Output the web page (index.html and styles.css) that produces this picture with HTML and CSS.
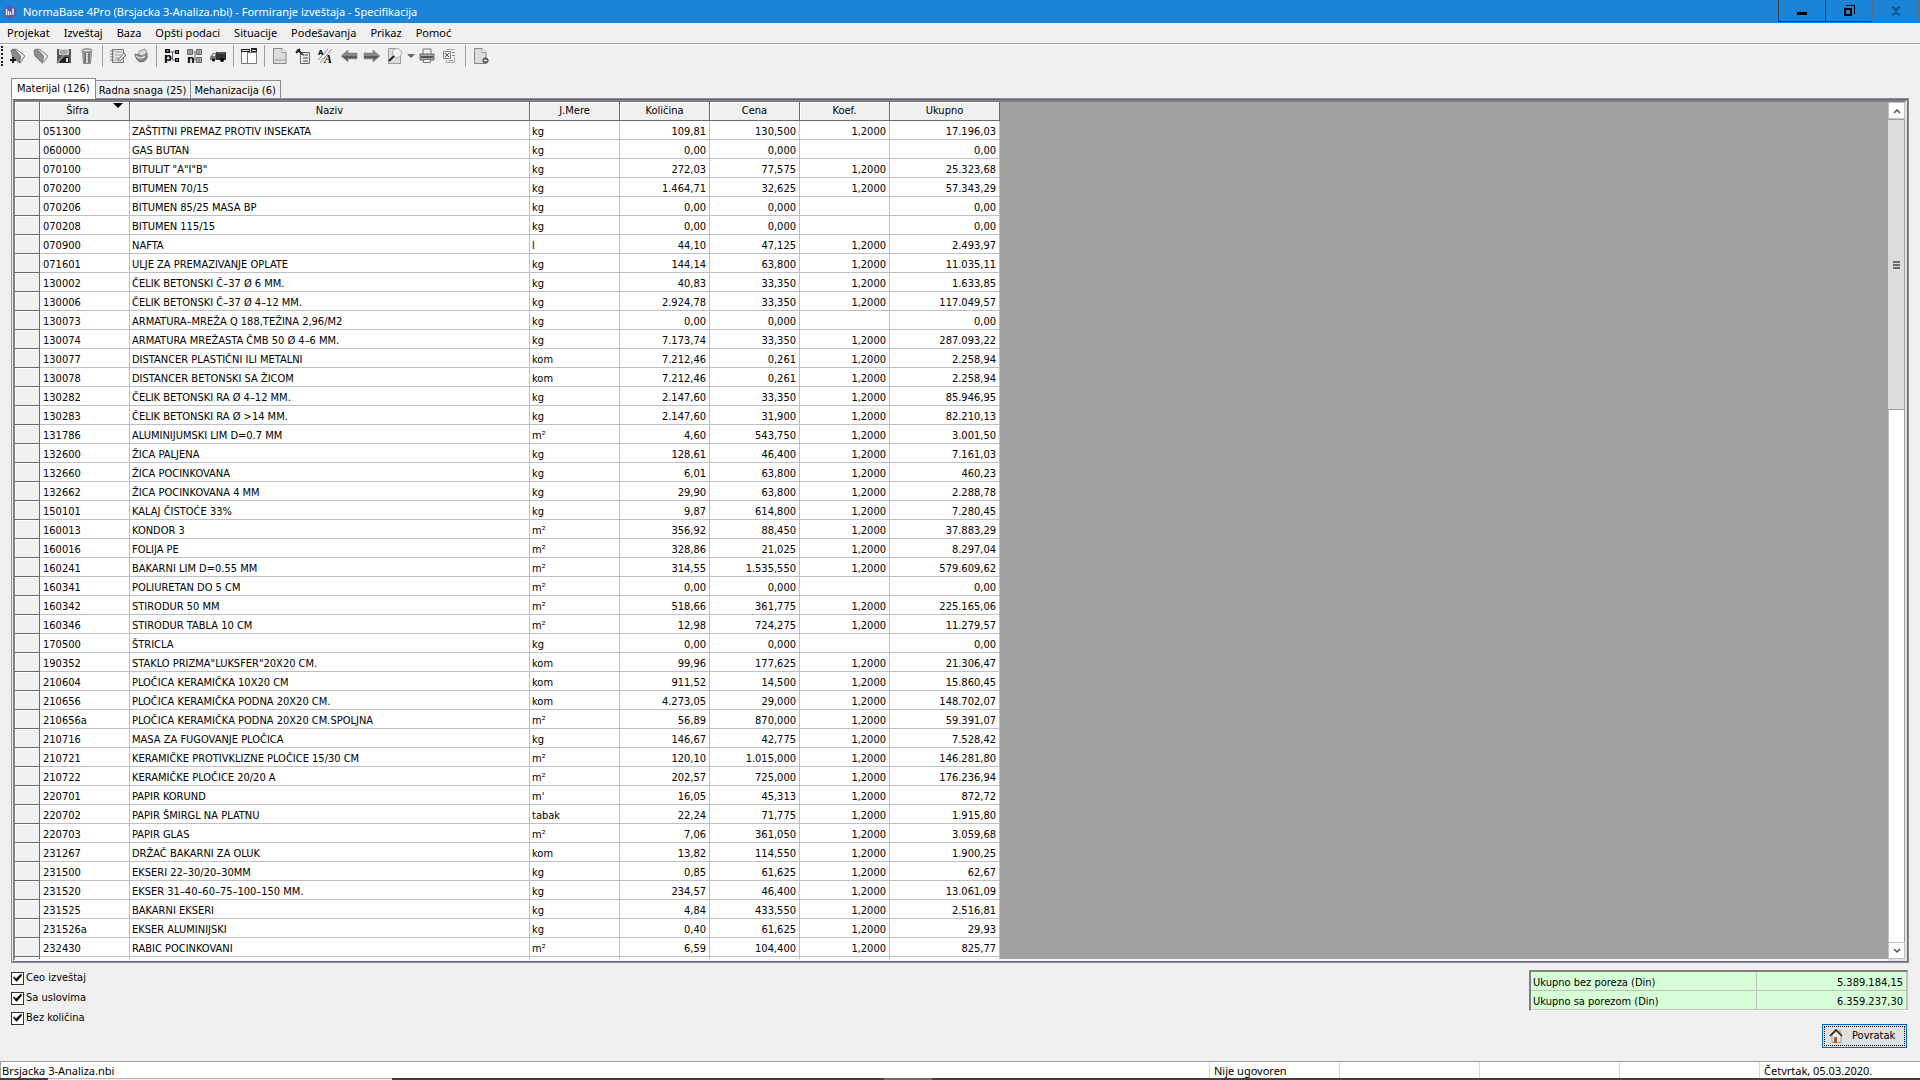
FILE: index.html
```html
<!DOCTYPE html>
<html lang="sr-Latn">
<head>
    <meta charset="UTF-8">
    <meta name="viewport" content="width=device-width, initial-scale=1.0">
    <title>NormaBase 4Pro</title>
    <link rel="stylesheet" href="styles.css">
</head>
<body>
    <header class="titlebar">
        <svg class="app-icon" viewBox="0 0 14 14">
            <circle cx="7" cy="7" r="6.5" fill="#5560a8"/>
            <path d="M3.5 4v6M5.5 6v4M7.5 7v3M10 3.5v6.500" stroke="#fff" stroke-width="1.300"/>
        </svg>
        <h1>NormaBase 4Pro (Brsjacka 3-Analiza.nbi) - Formiranje izveštaja - Specifikacija</h1>
        <div class="window-buttons">
            <button type="button" aria-label="Minimize">
                <svg viewBox="0 0 12 12"><path d="M1 7h10v3H1z"/></svg>
            </button>
            <button type="button" aria-label="Restore">
                <svg viewBox="0 0 12 12"><path d="M2 4h6v6H2z" fill="none" stroke="#000" stroke-width="2"/><path d="M3 .5h8.500V9" fill="none" stroke="#000"/></svg>
            </button>
            <button type="button" class="close" aria-label="Close">
                <svg viewBox="0 0 12 12"><path d="M2 2.500h2l4 7h2M10 2.500H8l-4 7H2" fill="none" stroke="#0d4a7c" stroke-width="1.500"/></svg>
            </button>
        </div>
    </header>

    <nav class="menu">
        <a href="#">Projekat</a>
        <a href="#">Izveštaj</a>
        <a href="#">Baza</a>
        <a href="#">Opšti podaci</a>
        <a href="#">Situacije</a>
        <a href="#">Podešavanja</a>
        <a href="#">Prikaz</a>
        <a href="#">Pomoć</a>
    </nav>

    <div class="toolbar">
        <span class="grip"></span>
        <button type="button" aria-label="Novi projekat">
            <svg viewBox="0 0 16 16"><path d="M2 2l4-1 9 7-5 7z" fill="#eee" stroke="#777"/><path d="M1 2.500l3-1.500 6.500 7-1 7L3 9z" fill="#8a8a8a" stroke="#666"/><path d="M7 1.500L15 8l-4 5" fill="none" stroke="#999"/><path d="M0 12h6M3 9v6" stroke="#222" stroke-width="2"/></svg>
        </button>
        <button type="button" aria-label="Otvori projekat">
            <svg viewBox="0 0 16 16"><path d="M2 2l4-1 9 7-5 7z" fill="#eee" stroke="#888"/><path d="M1 2.500l3-1.500 6.500 7-1 7L2 8z" fill="#8f8f8f" stroke="#777"/><path d="M7 1.500L15 8l-4 5" fill="none" stroke="#999"/></svg>
        </button>
        <button type="button" aria-label="Sačuvaj">
            <svg viewBox="0 0 16 16"><path d="M1 1h14v14H1z" fill="#555"/><path d="M3 1h10v6H3z" fill="#ccc"/><path d="M4 9h9v6H4z" fill="#222"/><path d="M10 10h2v4h-2z" fill="#ddd"/><path d="M4 3h8M4 5h7" stroke="#888"/><path d="M1 15l7-8" stroke="#888" stroke-width="2"/></svg>
        </button>
        <button type="button" aria-label="Obriši">
            <svg viewBox="0 0 16 16"><path d="M3.500 3.500h9l-1 12h-7z" fill="#b5b5b5" stroke="#888"/><path d="M6 5v10M10 5v10" stroke="#666" stroke-width="1.500"/><path d="M8 5v10" stroke="#eee"/><ellipse cx="8" cy="2.500" rx="5" ry="1.700" fill="#ddd" stroke="#666"/></svg>
        </button>
        <span class="separator"></span>
        <button type="button" aria-label="Beleške">
            <svg viewBox="0 0 16 16"><path d="M2.500 1.500h11v13h-11z" fill="#e6e6e6" stroke="#777"/><path d="M0 3h4M0 6h4M0 9h4M0 12h4" stroke="#777"/><path d="M5 4h7M5 7h6M5 10h4M5 12h3" stroke="#999"/><path d="M8 12l6-7 2 2-6 6z" fill="#ddd" stroke="#777"/></svg>
        </button>
        <button type="button" aria-label="Baza">
            <svg viewBox="0 0 16 16"><path d="M2 6q6 3 12-1v5q-2 4-6 4-5-1-6-8z" fill="#888" stroke="#666"/><path d="M5 6l2-3 5-2 2 4-5 3z" fill="#ddd" stroke="#888"/><path d="M3 8q5 4 9 0" fill="none" stroke="#ddd" stroke-width="1.500"/></svg>
        </button>
        <span class="separator"></span>
        <button type="button" aria-label="Pozicije">
            <svg viewBox="0 0 16 16"><path d="M1 1h5v4H1zM11 2h4v4h-4zM11 10h4v4h-4z"/><path d="M2.500 3h2M12 4h2M12 12h2" stroke="#fff"/><path d="M6 4h5M8.500 4v8H11" fill="none" stroke="#666"/><text class="letter" x="0" y="13">p</text></svg>
        </button>
        <button type="button" aria-label="Normativi">
            <svg viewBox="0 0 16 16"><path d="M.5 1.500h5v5h-5zM9.500 1.500h5v5h-5zM9.500 9.500h5v5h-5z" fill="#aaa" stroke="#666"/><path d="M3 1v5M12 1v5M12 9v5M6 4h4M8 4v8h2" fill="none" stroke="#777"/><text class="letter" x="0" y="15">n</text></svg>
        </button>
        <button type="button" aria-label="Transport">
            <svg viewBox="0 0 16 16"><path d="M6 4h10v8H6z" fill="#333"/><path d="M0 12V9l3-4h3v7z" fill="#777"/><path d="M2 8l2-2h1v2z" fill="#eee"/><path d="M7 5h8" stroke="#777"/><circle cx="3.500" cy="12" r="1.500"/><circle cx="12" cy="12" r="2"/></svg>
        </button>
        <span class="separator"></span>
        <button type="button" aria-label="Raspored">
            <svg viewBox="0 0 16 16"><path d="M.5 3.500h6v12h-6zM6.500 4.500h9v11h-9z" fill="#fff" stroke="#777"/><path d="M0 1h9v3H0zM10 0h6v4h-6z" fill="#222"/><path d="M1 2.500h7M11 2.500h4" stroke="#ddd"/></svg>
        </button>
        <span class="separator"></span>
        <button type="button" aria-label="Nova strana">
            <svg viewBox="0 0 16 16"><path d="M1.500.5H10l4 4v11H1.500z" fill="#ddd" stroke="#888"/><path d="M10 .5v4h4" fill="#fff" stroke="#999"/><path d="M3 12h10" stroke="#bbb" stroke-width="2"/></svg>
        </button>
        <button type="button" aria-label="Svojstva">
            <svg viewBox="0 0 16 16"><path d="M5.500 4.500h9v11h-9z" fill="#eee" stroke="#666"/><path d="M10 7h3M8 10h5M8 13h5" stroke="#444"/><path d="M1 2l3-1 6 7-3-1z" fill="#333"/><path d="M1 5l4-4" stroke="#222" stroke-width="2"/></svg>
        </button>
        <button type="button" aria-label="Font">
            <svg viewBox="0 0 16 16"><path d="M2 15L14 1M0 12L10 1" stroke="#888"/><text class="letter-small" x="0" y="7">A</text><text class="letter-italic" x="6" y="15">A</text></svg>
        </button>
        <button type="button" aria-label="Nazad">
            <svg viewBox="0 0 16 16"><path d="M0 8l7-6v3h9v6H7v3z" fill="#888" stroke="#777" stroke-width=".5"/><path d="M1 8h15v2H7v3z" fill="#5c5c5c"/></svg>
        </button>
        <button type="button" aria-label="Napred">
            <svg viewBox="0 0 16 16"><path d="M16 8L9 2v3H0v6h9v3z" fill="#888" stroke="#777" stroke-width=".5"/><path d="M15 8H0v2h9v3z" fill="#5c5c5c"/></svg>
        </button>
        <button type="button" aria-label="Pregled">
            <svg viewBox="0 0 16 16"><path d="M1.500.5h9l3 3v12h-12z" fill="#dcdcdc" stroke="#999"/><circle cx="10" cy="5" r="4.500" fill="#f2f2f2" stroke="#aaa"/><path d="M7 8l-5 5" stroke="#222" stroke-width="2"/></svg>
        </button>
        <button type="button" class="drop" aria-label="Opcije pregleda">
            <svg viewBox="0 0 8 5"><path d="M0 0h8L4 4z" fill="#666"/></svg>
        </button>
        <button type="button" aria-label="Štampa">
            <svg viewBox="0 0 16 16"><path d="M4 1h8v6H4z" fill="#eee" stroke="#777"/><path d="M1 6h14v6H1z" fill="#aaa" stroke="#666"/><path d="M2 9h12" stroke="#555" stroke-width="2"/><path d="M4.500 11.500h7v3h-7z" fill="#eee" stroke="#777"/></svg>
        </button>
        <button type="button" aria-label="Izvoz">
            <svg viewBox="0 0 16 16"><path d="M4.500 1.500h8M12.500 9v5.500h-8V12" fill="none" stroke="#aaa"/><path d="M1.500 3.500h7v7h-7z" fill="#e8e8e8" stroke="#888"/><path d="M3 5l4 4M7 5L3 9" stroke="#555"/><path d="M10 4.500h3M10 7.500h3M7 12.500h4" stroke="#888"/></svg>
        </button>
        <span class="separator"></span>
        <button type="button" aria-label="Zatvori izveštaj">
            <svg viewBox="0 0 16 16"><path d="M1.500.5H9l4 4v11H1.500z" fill="#ddd" stroke="#888"/><path d="M9 .5v4h4" fill="#fff" stroke="#999"/><circle cx="12.500" cy="12.500" r="2.700" fill="#777" stroke="#555"/><path d="M11 12.500h3" stroke="#eee"/></svg>
        </button>
    </div>

    <main>
        <div class="tabs" role="tablist">
            <button type="button" role="tab" class="tab active" aria-selected="true">Materijal (126)</button>
            <button type="button" role="tab" class="tab">Radna snaga (25)</button>
            <button type="button" role="tab" class="tab">Mehanizacija (6)</button>
        </div>

        <div class="pane">
            <div class="grid">
                <div class="grid-view">
                    <table class="items">
                        <colgroup>
                            <col class="col-mark">
                            <col class="col-code">
                            <col class="col-name">
                            <col class="col-num">
                            <col class="col-num">
                            <col class="col-num">
                            <col class="col-num">
                            <col class="col-total">
                        </colgroup>
                        <thead>
                            <tr>
                                <th></th>
                                <th class="sorted">Šifra</th>
                                <th>Naziv</th>
                                <th>J.Mere</th>
                                <th>Količina</th>
                                <th>Cena</th>
                                <th>Koef.</th>
                                <th>Ukupno</th>
                            </tr>
                        </thead>
                        <tbody id="items-body"></tbody>
                    </table>
                </div>
                <div class="scrollbar">
                    <button type="button" class="scroll-up" aria-label="Gore">
                        <svg viewBox="0 0 8 8"><path d="M1 6l3-3 3 3" fill="none" stroke="#505050" stroke-width="1.500"/></svg>
                    </button>
                    <div class="thumb"><span></span></div>
                    <button type="button" class="scroll-down" aria-label="Dole">
                        <svg viewBox="0 0 8 8"><path d="M1 2l3 3 3-3" fill="none" stroke="#505050" stroke-width="1.500"/></svg>
                    </button>
                </div>
            </div>
        </div>
    </main>

    <section class="bottom">
        <div class="options">
            <label><input type="checkbox" checked>Ceo izveštaj</label>
            <label><input type="checkbox" checked>Sa uslovima</label>
            <label><input type="checkbox" checked>Bez količina</label>
        </div>
        <div class="summary">
            <table class="totals">
                <tr><th scope="row">Ukupno bez poreza (Din)</th><td>5.389.184,15</td></tr>
                <tr><th scope="row">Ukupno sa porezom (Din)</th><td>6.359.237,30</td></tr>
            </table>
            <button type="button" class="back">
                <svg viewBox="0 0 14 14"><path d="M3 6v7.500h9V6L7.500 2z" fill="#eee" stroke="#999"/><path d="M5 8h3v6H5z" fill="#b5541c"/><path d="M1 7l6-6 6 6" fill="none" stroke="#2c2420" stroke-width="1.600"/><path d="M11 1v3" stroke="#888"/></svg>
                <span>Povratak</span>
            </button>
        </div>
    </section>

    <footer class="statusbar">
        <span class="file">Brsjacka 3-Analiza.nbi</span>
        <span>Nije ugovoren</span>
        <span></span>
        <span></span>
        <span></span>
        <span>Četvrtak, 05.03.2020.</span>
    </footer>
    <div class="taskbar"><span class="search"></span><span class="task"></span></div>

    <script>
        // code | name | unit | quantity | price | coefficient | total
        const items = `
051300|ZAŠTITNI PREMAZ PROTIV INSEKATA|kg|109,81|130,500|1,2000|17.196,03
060000|GAS BUTAN|kg|0,00|0,000||0,00
070100|BITULIT "A"I"B"|kg|272,03|77,575|1,2000|25.323,68
070200|BITUMEN 70/15|kg|1.464,71|32,625|1,2000|57.343,29
070206|BITUMEN 85/25 MASA BP|kg|0,00|0,000||0,00
070208|BITUMEN 115/15|kg|0,00|0,000||0,00
070900|NAFTA|l|44,10|47,125|1,2000|2.493,97
071601|ULJE ZA PREMAZIVANJE OPLATE|kg|144,14|63,800|1,2000|11.035,11
130002|ČELIK BETONSKI Č–37 Ø 6 MM.|kg|40,83|33,350|1,2000|1.633,85
130006|ČELIK BETONSKI Č–37 Ø 4–12 MM.|kg|2.924,78|33,350|1,2000|117.049,57
130073|ARMATURA–MREŽA Q 188,TEŽINA 2,96/M2|kg|0,00|0,000||0,00
130074|ARMATURA MREŽASTA ČMB 50 Ø 4–6 MM.|kg|7.173,74|33,350|1,2000|287.093,22
130077|DISTANCER PLASTIČNI ILI METALNI|kom|7.212,46|0,261|1,2000|2.258,94
130078|DISTANCER BETONSKI SA ŽICOM|kom|7.212,46|0,261|1,2000|2.258,94
130282|ČELIK BETONSKI RA Ø 4–12 MM.|kg|2.147,60|33,350|1,2000|85.946,95
130283|ČELIK BETONSKI RA Ø >14 MM.|kg|2.147,60|31,900|1,2000|82.210,13
131786|ALUMINIJUMSKI LIM D=0.7 MM|m²|4,60|543,750|1,2000|3.001,50
132600|ŽICA PALJENA|kg|128,61|46,400|1,2000|7.161,03
132660|ŽICA POCINKOVANA|kg|6,01|63,800|1,2000|460,23
132662|ŽICA POCINKOVANA 4 MM|kg|29,90|63,800|1,2000|2.288,78
150101|KALAJ ČISTOĆE 33%|kg|9,87|614,800|1,2000|7.280,45
160013|KONDOR 3|m²|356,92|88,450|1,2000|37.883,29
160016|FOLIJA PE|m²|328,86|21,025|1,2000|8.297,04
160241|BAKARNI LIM D=0.55 MM|m²|314,55|1.535,550|1,2000|579.609,62
160341|POLIURETAN DO 5 CM|m²|0,00|0,000||0,00
160342|STIRODUR 50 MM|m²|518,66|361,775|1,2000|225.165,06
160346|STIRODUR TABLA 10 CM|m²|12,98|724,275|1,2000|11.279,57
170500|ŠTRICLA|kg|0,00|0,000||0,00
190352|STAKLO PRIZMA"LUKSFER"20X20 CM.|kom|99,96|177,625|1,2000|21.306,47
210604|PLOČICA KERAMIČKA 10X20 CM|kom|911,52|14,500|1,2000|15.860,45
210656|PLOČICA KERAMIČKA PODNA 20X20 CM.|kom|4.273,05|29,000|1,2000|148.702,07
210656a|PLOČICA KERAMIČKA PODNA 20X20 CM.SPOLJNA|m²|56,89|870,000|1,2000|59.391,07
210716|MASA ZA FUGOVANJE PLOČICA|kg|146,67|42,775|1,2000|7.528,42
210721|KERAMIČKE PROTIVKLIZNE PLOČICE 15/30 CM|m²|120,10|1.015,000|1,2000|146.281,80
210722|KERAMIČKE PLOČICE 20/20 A|m²|202,57|725,000|1,2000|176.236,94
220701|PAPIR KORUND|m'|16,05|45,313|1,2000|872,72
220702|PAPIR ŠMIRGL NA PLATNU|tabak|22,24|71,775|1,2000|1.915,80
220703|PAPIR GLAS|m²|7,06|361,050|1,2000|3.059,68
231267|DRŽAČ BAKARNI ZA OLUK|kom|13,82|114,550|1,2000|1.900,25
231500|EKSERI 22–30/20–30MM|kg|0,85|61,625|1,2000|62,67
231520|EKSER 31–40–60–75–100–150 MM.|kg|234,57|46,400|1,2000|13.061,09
231525|BAKARNI EKSERI|kg|4,84|433,550|1,2000|2.516,81
231526a|EKSER ALUMINIJSKI|kg|0,40|61,625|1,2000|29,93
232430|RABIC POCINKOVANI|m²|6,59|104,400|1,2000|825,77
||||||`;

        const body = document.getElementById('items-body');

        items.trim().split('\n').forEach(line => {
            const row = body.insertRow();
            row.insertCell();
            line.split('|').forEach(value => {
                row.insertCell().textContent = value;
            });
        });
    </script>
</body>
</html>
```
FILE: styles.css
```css
* {
    margin: 0;
    padding: 0;
    box-sizing: border-box;
}

body {
    display: flex;
    flex-direction: column;
    height: 100vh;
    overflow: hidden;
    background: #f0f0f0;
    color: #000;
    font: 11px/14px "DejaVu Sans Condensed", Tahoma, sans-serif;
}

button {
    border: none;
    background: none;
    color: inherit;
    font: inherit;
}

svg {
    display: block;
    overflow: visible;
}

/* Title bar */
.titlebar {
    display: flex;
    align-items: center;
    height: 23px;
    padding-left: 3px;
    background: #1a84d9;
    color: #fff;
    font-family: "Noto Sans", "Segoe UI", sans-serif;
}

.app-icon {
    width: 14px;
    height: 14px;
    margin-right: 6px;
}

.titlebar h1 {
    flex: 1;
    font-size: 11px;
    font-weight: normal;
}

.window-buttons {
    display: flex;
    align-self: flex-start;
    padding-right: 1px;
}

.window-buttons button {
    display: flex;
    align-items: center;
    justify-content: center;
    width: 47px;
    height: 22px;
    border: solid #2b3a47;
    border-width: 0 0 1px 1px;
}

.window-buttons .close {
    border-color: #5c6b78;
    border-right-width: 1px;
}

.window-buttons svg {
    width: 12px;
    height: 12px;
}

/* Menu */
.menu {
    display: flex;
    align-items: center;
    gap: 14px;
    height: 21px;
    padding-left: 7px;
    border-bottom: 1px solid #a0a0a0;
    font-family: "Noto Sans", "Segoe UI", sans-serif;
}

.menu a {
    color: #000;
    text-decoration: none;
}

/* Toolbar */
.toolbar {
    display: flex;
    height: 24px;
    border-top: 1px solid #fff;
}

.toolbar button {
    display: flex;
    align-items: center;
    justify-content: center;
    width: 23px;
    height: 22px;
}

.toolbar svg {
    width: 16px;
    height: 16px;
}

.toolbar .drop {
    width: 9px;
}

.toolbar .drop svg {
    width: 8px;
    height: 5px;
}

.grip {
    width: 5px;
    height: 20px;
    border-left: 2px dotted #222;
    margin: 1px 0 0 1px;
}

.separator {
    width: 8px;
    height: 22px;
    background: linear-gradient(#a0a0a0, #a0a0a0) center / 1px 100% no-repeat;
}

.letter {
    font: bold 11px "DejaVu Sans", sans-serif;
}

.letter-small {
    font: bold 7px "DejaVu Sans", sans-serif;
}

.letter-italic {
    font: italic bold 12px "Liberation Serif", serif;
}

/* Tabs */
main {
    display: flex;
    flex: 1;
    flex-direction: column;
    min-height: 0;
    padding: 10px 11px 0;
}

.tabs {
    display: flex;
    align-items: flex-end;
    height: 20px;
}

.tab {
    height: 18px;
    padding: 2px 4px 0 3px;
    border: 1px solid #8c8c96;
    border-width: 1px 1px 0 0;
}

.tab.active {
    height: 21px;
    margin-bottom: -1px;
    padding: 0 5px;
    border-left-width: 1px;
    background: #fff;
    z-index: 1;
}

/* Grid */
.pane {
    display: flex;
    flex: 1;
    min-height: 0;
    border: 1px solid #8c8c9b;
}

.grid {
    display: flex;
    flex: 1;
    border: 1px solid #696973;
    border-left-color: #f0f0f0;
}

.grid-view {
    flex: 1;
    overflow: hidden;
    border: solid #808080;
    border-width: 2px 0 2px 2px;
    border-bottom-color: #f8f8f8;
    background: #a0a0a0;
}

.items {
    width: 985px;
    border-collapse: separate;
    border-spacing: 0;
    table-layout: fixed;
    background: #fff;
}

.col-mark { width: 25px; }
.col-code { width: 90px; }
.col-name { width: 400px; }
.col-num { width: 90px; }
.col-total { width: 110px; }

.items th,
.items td {
    height: 19px;
    overflow: hidden;
    white-space: nowrap;
}

.items th {
    border-right: 1px solid #696969;
    border-bottom: 1px solid #696969;
    background: #f0f0f0;
    box-shadow: inset 1px 1px #fff;
    font-weight: normal;
}

.items th.sorted {
    position: relative;
    padding-right: 14px;
}

.items th.sorted::after {
    content: "";
    position: absolute;
    top: 1px;
    right: 6px;
    border: 5px solid transparent;
    border-top-color: #000;
    border-bottom: none;
}

.items td {
    padding: 3px 3px 0 2px;
    border-right: 1px solid #c0c0c0;
    border-bottom: 1px solid #c0c0c0;
}

.items td:first-child {
    border-color: #696969;
    background: #f0f0f0;
    box-shadow: inset 1px 1px #fff;
}

.items td:nth-child(2) {
    padding-left: 3px;
}

.items td:nth-child(n+5) {
    text-align: right;
}

.scrollbar {
    display: flex;
    flex-direction: column;
    width: 19px;
    border: solid #e3e3e3;
    border-width: 2px 2px 2px 0;
    border-top-color: #808080;
    background: #fff;
    box-shadow: inset -1px 0 #a0a0a0, inset 1px 0 #c0c0c0;
}

.scrollbar button {
    display: flex;
    align-items: center;
    justify-content: center;
    width: 17px;
    height: 17px;
    border: 1px solid #c0c0c0;
}

.scrollbar svg {
    width: 8px;
    height: 8px;
}

.thumb {
    display: flex;
    align-items: center;
    justify-content: center;
    flex: 0 0 34%;
    border: solid #a0a0a0;
    border-width: 1px 1px 1px 0;
    background: #dcdcdc;
}

.thumb span {
    width: 7px;
    height: 8px;
    background: repeating-linear-gradient(#696969 0 2px, transparent 2px 3px);
}

.scroll-down {
    margin-top: auto;
}

/* Options and totals */
.bottom {
    display: flex;
    justify-content: space-between;
    height: 98px;
    padding: 7px 12px 0 11px;
}

.options {
    display: flex;
    flex-direction: column;
    gap: 4px;
    line-height: 16px;
}

.options label {
    display: flex;
    align-items: center;
    gap: 2px;
}

.options input {
    appearance: none;
    width: 13px;
    height: 13px;
    border: 1px solid #333;
    background: #fff;
}

.options input:checked::before {
    content: "";
    display: block;
    width: 11px;
    height: 11px;
    background: #111;
    clip-path: polygon(1px 5px, 2px 4px, 4px 6px, 9px 1px, 10px 3px, 5px 9px, 4px 9px);
}

.summary {
    display: flex;
    flex-direction: column;
    align-items: flex-end;
    gap: 13px;
}

.totals {
    width: 379px;
    border: 2px solid #808080;
    border-right: 1px solid #c0c0c0;
    border-bottom: 1px solid #fff;
    border-spacing: 0;
    background: #d7ffd7;
}

.totals th,
.totals td {
    height: 19px;
    padding: 3px 3px 0 2px;
    border-right: 1px solid #c0c0c0;
    border-bottom: 1px solid #c0c0c0;
    font-weight: normal;
    text-align: left;
}

.totals td {
    width: 40%;
    text-align: right;
}

.back {
    display: flex;
    align-items: center;
    gap: 9px;
    width: 85px;
    height: 24px;
    margin-right: 1px;
    padding-left: 6px;
    border: 1px solid #0067c0;
    background: #e1e1e1;
    outline: 1px dotted #000;
    outline-offset: -3px;
}

.back svg {
    width: 14px;
    height: 14px;
}

/* Status bar */
.statusbar {
    display: grid;
    grid-template-columns: 1fr 130px 140px 140px 140px 161px;
    height: 17px;
    border-top: 1px solid #a0a0a0;
    background: #fff;
    font-family: "Noto Sans", "Segoe UI", sans-serif;
    line-height: 18px;
}

.statusbar span {
    padding-left: 4px;
    border-left: 1px solid #d7d7d7;
}

.statusbar .file {
    padding-left: 1px;
    border-left-color: #a0a0a0;
}

.taskbar {
    display: flex;
    height: 2px;
    background: #404040;
}

.search {
    width: 344px;
    margin-left: 48px;
    background: #f2f2f2;
    border-top: 1px solid #b4b4b4;
}

.task {
    width: 48px;
    margin-left: 492px;
    background: #6e6e6e;
}
```
